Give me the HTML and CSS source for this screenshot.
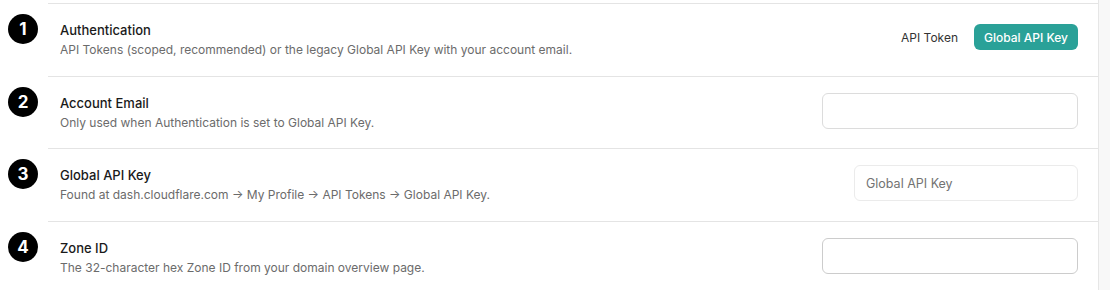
FILE: index.html
```html
<!DOCTYPE html>
<html>

<head>
    <title>Cloudflare Settings</title>
    <meta charset="utf-8">
    <meta name="viewport" content="width=device-width, initial-scale=1">
    <link rel="stylesheet" href="styles.css">
</head>

<body>
    <div class="settings">
        <div class="step">
            <span class="step-num">1</span>
            <div class="step-body">
                <div class="step-text">
                    <div class="step-title">Authentication</div>
                    <div class="step-desc">API Tokens (scoped, recommended) or the legacy Global API Key with your account email.</div>
                </div>
                <div class="toggle">
                    <button class="toggle-btn">API Token</button>
                    <button class="toggle-btn active">Global API Key</button>
                </div>
            </div>
        </div>
        <div class="step">
            <span class="step-num">2</span>
            <div class="step-body">
                <div class="step-text">
                    <div class="step-title">Account Email</div>
                    <div class="step-desc">Only used when Authentication is set to Global API Key.</div>
                </div>
                <input class="field" type="email">
            </div>
        </div>
        <div class="step">
            <span class="step-num">3</span>
            <div class="step-body">
                <div class="step-text">
                    <div class="step-title">Global API Key</div>
                    <div class="step-desc">Found at dash.cloudflare.com → My Profile → API Tokens → Global API Key.</div>
                </div>
                <input class="field field-short" type="password" placeholder="Global API Key">
            </div>
        </div>
        <div class="step">
            <span class="step-num">4</span>
            <div class="step-body">
                <div class="step-text">
                    <div class="step-title">Zone ID</div>
                    <div class="step-desc">The 32-character hex Zone ID from your domain overview page.</div>
                </div>
                <input class="field field-dark" type="text">
            </div>
        </div>
    </div>
</body>

</html>
```

FILE: styles.css
```css
body,
html {
    font-family: 'Inter', 'Liberation Sans', sans-serif;
    margin: 0;
    padding: 0;
    background-color: #f8f8f8;
}

.settings {
    width: 1098px;
    padding-top: 3px;
    background-color: #ffffff;
    border-right: 1px solid #e6e6e6;
}

.step {
    display: flex;
    align-items: flex-start;
}

.step-num {
    flex: none;
    width: 30px;
    height: 30px;
    margin: 11px 10px 0 8px;
    border-radius: 50%;
    background-color: #000000;
    color: #ffffff;
    font-size: 17px;
    font-weight: 700;
    line-height: 30px;
    text-align: center;
}

.step-body {
    flex: 1;
    display: flex;
    justify-content: space-between;
    align-items: center;
    padding: 17px 20px 16.5px 12px;
    border-top: 1px solid #e4e4e4;
}

.step-title {
    font-size: 13px;
    font-weight: 500;
    line-height: 18px;
    color: #1a1a1a;
}

.step-desc {
    margin-top: 2px;
    font-size: 12px;
    line-height: 18px;
    color: #6b6b6b;
}

.toggle {
    display: flex;
    gap: 6px;
    margin-top: -6px;
}

.toggle-btn {
    font-family: inherit;
    font-size: 12px;
    font-weight: 400;
    height: 26px;
    padding: 0 10px;
    border: 0;
    border-radius: 6px;
    background: transparent;
    color: #333333;
}

.toggle-btn.active {
    font-weight: 500;
    background-color: #2aa198;
    color: #ffffff;
}

.field {
    width: 256px;
    height: 36px;
    box-sizing: border-box;
    margin-top: -4px;
    padding: 0 11px;
    border: 1px solid #dcdcdc;
    border-radius: 6px;
    font-family: inherit;
    font-size: 12.5px;
    color: #333333;
    background-color: #ffffff;
}

.field::placeholder {
    color: #737373;
}

.field-short {
    width: 224px;
    border-color: #ebebeb;
}

.field-dark {
    border-color: #cccccc;
}
```
